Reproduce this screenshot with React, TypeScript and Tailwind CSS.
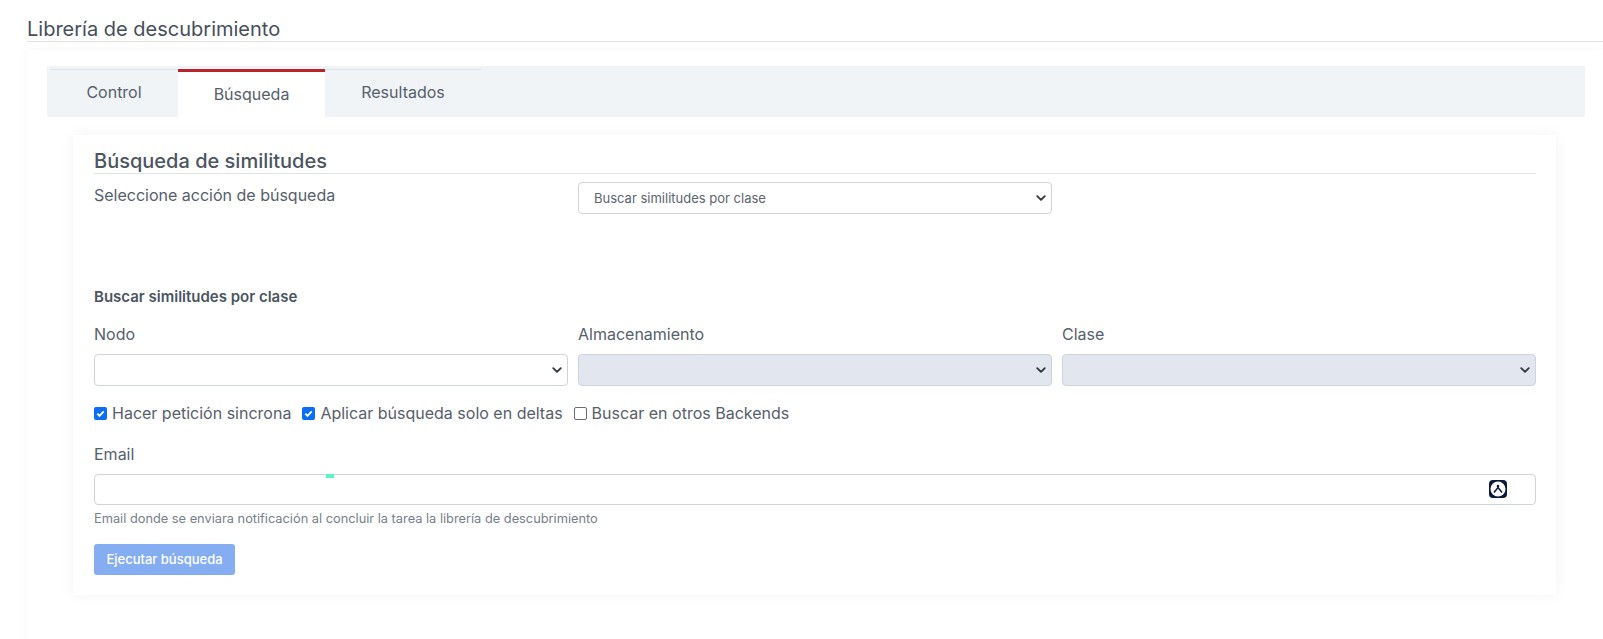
import React from 'react';

const Chevron = () => (
  <svg viewBox="0 0 16 16" className="h-[10px] w-[10px] text-[#343a40]" fill="none" stroke="currentColor" strokeWidth="3" strokeLinecap="round" strokeLinejoin="round">
    <path d="M2 5l6 6 6-6" />
  </svg>
);

const SelectBox: React.FC<{ value?: string; disabled?: boolean }> = ({ value, disabled }) => (
  <div
    className={`flex h-8 items-center justify-between rounded-[4px] border border-[#ced4da] pl-[15px] pr-[5px] text-[13px] text-[#5b6470] ${
      disabled ? 'bg-[#e2e6ee]' : 'bg-white'
    }`}
  >
    <span>{value}</span>
    <Chevron />
  </div>
);

const Check: React.FC<{ checked?: boolean; label: string }> = ({ checked, label }) => (
  <label className="flex items-center gap-[5px]">
    {checked ? (
      <span className="flex h-[13px] w-[13px] items-center justify-center rounded-[2px] bg-[#0b6cf5]">
        <svg viewBox="0 0 12 12" className="h-[11px] w-[11px]" fill="none" stroke="white" strokeWidth="2">
          <path d="M2.5 6.2l2.4 2.4 4.6-5" />
        </svg>
      </span>
    ) : (
      <span className="h-[13px] w-[13px] rounded-[2px] border border-[#6b6b6b] bg-white" />
    )}
    <span>{label}</span>
  </label>
);

export default function App() {
  return (
    <div className="h-[639px] overflow-hidden bg-white pl-[27px] font-['Inter',sans-serif] text-[#56606c]">
      {/* Page title */}
      <h1 className="h-[42px] border-b border-[#e2e2e2] pt-[17px] text-[20px] leading-[24px] text-[#454f5b]">
        Librería de descubrimiento
      </h1>

      <div className="mt-2 h-[600px] bg-white pl-5 pr-[18px] pt-4 shadow-[0_0_12px_rgba(0,0,0,0.04)]">
        {/* Tabs */}
        <div className="h-[51px] bg-[#f0f4f7] pl-[3px] pt-[3px] text-[16px]">
          <div className="flex h-12 w-[431px] border-t border-[#dde3ea]">
            <div className="flex w-[128px] items-start justify-center pt-[10px]">Control</div>
            <div className="-mt-px flex w-[147px] items-start justify-center border-t-[3px] border-[#b9242c] bg-white pt-[10px]">
              Búsqueda
            </div>
            <div className="flex w-[156px] items-start justify-center pt-[10px]">Resultados</div>
          </div>
        </div>

        {/* Card */}
        <div className="ml-[26px] mr-[29px] mt-[18px] h-[460px] bg-white pl-[21px] pr-5 pt-[14px] shadow-[0_0_14px_rgba(0,0,0,0.05)]">
          <h2 className="h-[25px] border-b border-[#e2e2e2] text-[20px] font-medium leading-[24px] text-[#4b5561]">
            Búsqueda de similitudes
          </h2>

          <div className="mt-2 grid grid-cols-3 gap-x-[10px] text-[16px] leading-[26px]">
            <div>Seleccione acción de búsqueda</div>
            <SelectBox value="Buscar similitudes por clase" />
          </div>

          <div className="mt-[74px] text-[15px] font-semibold leading-[18px] text-[#4b5561]">
            Buscar similitudes por clase
          </div>

          <div className="mt-[18px] grid grid-cols-3 gap-x-[10px] text-[16px] leading-[20px]">
            <div>
              <div className="mb-[10px]">Nodo</div>
              <SelectBox />
            </div>
            <div>
              <div className="mb-[10px]">Almacenamiento</div>
              <SelectBox disabled />
            </div>
            <div>
              <div className="mb-[10px]">Clase</div>
              <SelectBox disabled />
            </div>
          </div>

          <div className="mt-[17px] flex gap-[11px] pr-px text-[16px] leading-[20px]">
            <Check checked label="Hacer petición sincrona" />
            <Check checked label="Aplicar búsqueda solo en deltas" />
            <Check label="Buscar en otros Backends" />
          </div>

          <div className="mt-[21px] text-[16px] leading-[20px]">Email</div>

          <div className="relative mt-[10px] h-[31px] rounded-[4px] border border-[#ced4da] bg-white">
            {/* extension marks drawn over the input */}
            <span className="absolute left-[231px] top-[-1px] h-1 w-2 bg-[#5cf5c0]" />
            <span className="absolute right-[28px] top-[5px] flex h-[18px] w-[18px] items-center justify-center rounded-[4px] bg-[#0a1a3a]">
              <svg viewBox="0 0 16 16" className="h-4 w-4">
                <circle cx="8" cy="8" r="7.5" fill="white" />
                <circle cx="8" cy="5" r="1.3" fill="#0a1a3a" />
                <path d="M4 11.5L8 6.5l4 5" fill="none" stroke="#0a1a3a" strokeWidth="1.5" />
              </svg>
            </span>
          </div>

          <div className="mt-[6px] text-[12.8px] leading-[16px] text-[#76808c]">
            Email donde se enviara notificación al concluir la tarea la librería de descubrimiento
          </div>

          <button className="mt-[17px] flex h-[31px] w-[141px] items-center justify-center rounded-[3px] bg-[#85adf2] text-[13px] font-medium text-white">
            Ejecutar búsqueda
          </button>
        </div>
      </div>
    </div>
  );
}
